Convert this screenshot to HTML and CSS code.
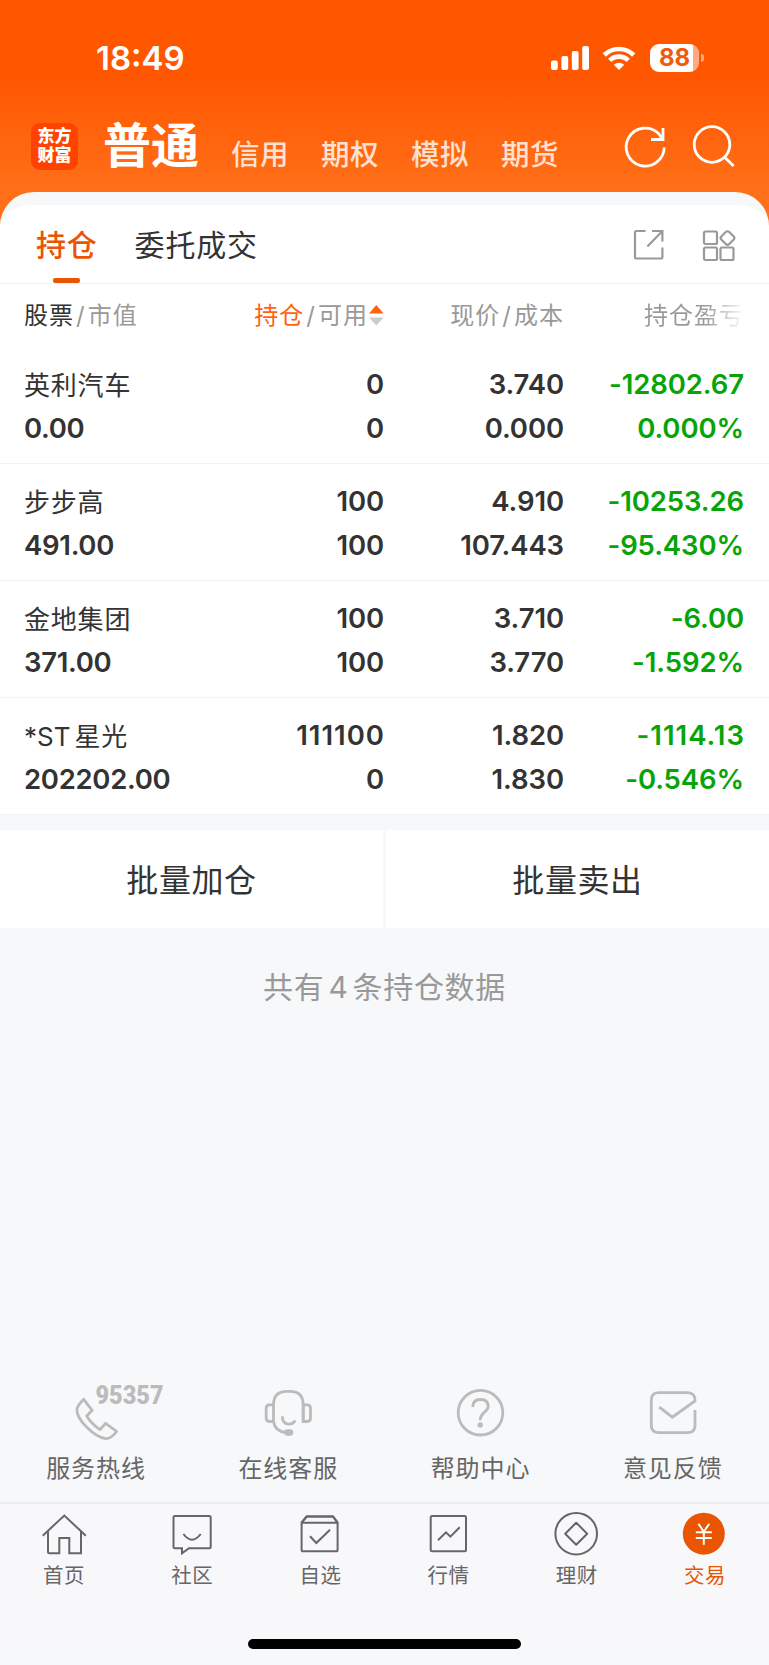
FILE: index.html
```html
<!DOCTYPE html>
<html lang="zh-CN">
<head>
    <meta charset="UTF-8">
    <meta name="viewport" content="width=device-width, initial-scale=1.0">
    <title>持仓</title>
    <link rel="stylesheet" href="styles.css">
</head>
<body>
    <div class="page">
        <header class="top">
            <div class="status">
                <span class="time">18:49</span>
                <div class="status-icons">
                    <svg class="signal" width="38" height="24" viewBox="0 0 38 24" fill="#fff">
                        <rect x="0" y="14.5" width="6.8" height="9.5" rx="2"/>
                        <rect x="10.4" y="10" width="6.8" height="14" rx="2"/>
                        <rect x="20.8" y="5" width="6.8" height="19" rx="2"/>
                        <rect x="31.2" y="0" width="6.8" height="24" rx="2"/>
                    </svg>
                    <svg class="wifi" width="34" height="24" viewBox="0 0 34 24" fill="none" stroke="#fff" stroke-width="4.6">
                        <path d="M2.3 9a21 21 0 0 1 29.4 0"/>
                        <path d="M7.7 14.4a13.3 13.3 0 0 1 18.6 0"/>
                        <path d="M17 24l-5.2-5.2a7.4 7.4 0 0 1 10.4 0z" fill="#fff" stroke="none"/>
                    </svg>
                    <div class="battery"><span>88</span></div>
                    <div class="battery-tip"></div>
                </div>
            </div>
            <nav class="accounts">
                <div class="logo">东方<br>财富</div>
                <a class="account active">普通</a>
                <a class="account">信用</a>
                <a class="account">期权</a>
                <a class="account">模拟</a>
                <a class="account">期货</a>
                <svg class="refresh" width="44" height="44" viewBox="0 0 44 44" fill="none" stroke="#fff" stroke-width="2.8">
                    <path d="M41.2 22.5A19 19 0 1 1 35.5 8.5L40 14.5M40 3v11.5H28"/>
                </svg>
                <svg class="search" width="44" height="44" viewBox="0 0 44 44" fill="none" stroke="#fff" stroke-width="2.8">
                    <circle cx="21" cy="19.5" r="17.8"/><path d="M33.4 31.9l9.2 9"/>
                </svg>
            </nav>
        </header>

        <main class="panel">
            <div class="tabs">
                <a class="tab active">持仓</a>
                <a class="tab">委托成交</a>
                <svg class="share" width="32" height="32" viewBox="0 0 32 32" fill="none" stroke="#999" stroke-width="2.2">
                    <path d="M12.6 2H3.5Q2 2 2 3.5V28Q2 29.5 3.5 29.5h24.4Q29.4 29.5 29.4 28v-9.5M19 2h10.4v10.5M29.4 2l-15 15.5"/>
                </svg>
                <svg class="grid-icon" width="34" height="34" viewBox="0 0 34 34" fill="none" stroke="#999" stroke-width="2.2">
                    <rect x="2" y="2.5" width="13" height="12.5" rx="1.5"/>
                    <rect x="2" y="18.5" width="13" height="12.5" rx="1.5"/>
                    <rect x="18.5" y="18.5" width="13" height="12.5" rx="1.5"/>
                    <rect x="20" y="3.5" width="11" height="11" rx="2.5" transform="rotate(45 25.5 9)"/>
                </svg>
            </div>

            <div class="row head">
                <div><b>股票</b><i>/</i>市值</div>
                <div class="sort"><b class="orange">持仓</b><i>/</i>可用<svg width="15" height="21" viewBox="0 0 15 21"><path d="M0 8.500L7.300 0l7.200 8.500z" fill="#ff6210"/><path d="M0 12.500h14.500L7.300 20.500z" fill="#ccc"/></svg></div>
                <div>现价<i>/</i>成本</div>
                <div class="fade">持仓盈亏</div>
            </div>
            <div class="row">
                <div><span class="name">英利汽车</span>0.00</div>
                <div>0<br>0</div>
                <div>3.740<br>0.000</div>
                <div class="green">-12802.67<br>0.000%</div>
            </div>
            <div class="row">
                <div><span class="name">步步高</span>491.00</div>
                <div>100<br>100</div>
                <div>4.910<br>107.443</div>
                <div class="green">-10253.26<br>-95.430%</div>
            </div>
            <div class="row">
                <div><span class="name">金地集团</span>371.00</div>
                <div>100<br>100</div>
                <div>3.710<br>3.770</div>
                <div class="green">-6.00<br>-1.592%</div>
            </div>
            <div class="row">
                <div><span class="name"><span class="latin">*ST</span>星光</span>202202.00</div>
                <div><span class="loose">111100</span><br>0</div>
                <div>1.820<br>1.830</div>
                <div class="green"><span class="loose">-1114.13</span><br>-0.546%</div>
            </div>
        </main>

        <div class="batch">
            <a>批量加仓</a>
            <a>批量卖出</a>
        </div>
        <p class="count">共有<span>4</span>条持仓数据</p>

        <div class="services">
            <a>
                <svg width="136" height="60" viewBox="0 0 136 60" fill="none" stroke="#bbb" stroke-width="2.8" stroke-linejoin="round">
                    <path d="M55.7 15.3L64.2 26.3 58.7 32Q63.5 40 72 45.6L77.7 39.3 88.7 47.5Q83 54.8 77.5 54.6C67 53 48.3 36.5 48.9 25Q50 21 55.7 15.3z"/>
                    <text class="hotline" x="67.5" y="19.5" textLength="68" lengthAdjust="spacingAndGlyphs">95357</text>
                </svg>
                服务热线
            </a>
            <a>
                <svg width="60" height="60" viewBox="0 0 60 60" fill="none" stroke="#bbb" stroke-width="2.8">
                    <path d="M15.5 37.5V21Q15.5 7.3 29 7.3h3Q45.2 7.3 45.2 21v16.5M15.5 37.5Q17 47.5 28 48.5"/>
                    <path d="M15.5 20.8h-4Q8.2 20.8 8.2 24v10.3q0 3.2 3.3 3.2h4M45.2 20.8h4q3.3 0 3.3 3.2v10.3q0 3.2-3.3 3.2h-4z"/>
                    <path d="M24.3 32.3Q24.3 40.2 31 40.2q4 0 6.2-3.7"/>
                    <rect x="26.3" y="45.3" width="9" height="6.5" rx="3" fill="#bbb" stroke="none"/>
                </svg>
                在线客服
            </a>
            <a>
                <svg width="60" height="60" viewBox="0 0 60 60" fill="none" stroke="#bbb" stroke-width="2.8">
                    <circle cx="29.5" cy="28.7" r="22.3"/>
                    <path d="M21.8 23Q21.8 15.5 29.5 15.5t7.7 7C37.2 28 29.2 28 29.2 36.3"/>
                    <circle cx="29.2" cy="41" r="2.7" fill="#bbb" stroke="none"/>
                </svg>
                帮助中心
            </a>
            <a>
                <svg width="60" height="60" viewBox="0 0 60 60" fill="none" stroke="#bbb" stroke-width="2.8">
                    <path d="M16.3 23.2l13 10L52 17q.3-8.300-7.500-8.300H16Q8.300 8.700 8.300 16v25.500q0 7.200 7.700 7.200h28.500q7.500 0 7.500-7.200V26"/>
                </svg>
                意见反馈
            </a>
        </div>

        <nav class="tabbar">
            <a>
                <svg width="48" height="48" viewBox="0 0 48 48" fill="none" stroke="#666" stroke-width="2">
                    <path d="M2.7 25.7L24.3 5.5l21.5 20.2M8 21.5v20.3q0 1.5 1.5 1.5h9.8V28h10v15.3H41V21.5"/>
                </svg>
                首页
            </a>
            <a>
                <svg width="48" height="48" viewBox="0 0 48 48" fill="none" stroke="#666" stroke-width="2">
                    <path d="M7 6h34.2q1.5 0 1.5 1.5v29.3q0 1.5-1.5 1.5H21l-7 5v-5H7q-1.5 0-1.5-1.5V7.5Q5.5 6 7 6zM15.4 24q8.6 11.5 17.3 0"/>
                </svg>
                社区
            </a>
            <a>
                <svg width="48" height="48" viewBox="0 0 48 48" fill="none" stroke="#666" stroke-width="2">
                    <path d="M5.6 12.7h36v27q0 1.6-1.6 1.6H7.2q-1.6 0-1.6-1.6zl5-6.2h26.4l4.6 6.2M14 26.3l6.3 6.7L34 19.7"/>
                    <path d="M5.6 12.7l5-6.2h26.400l4.600 6.200"/>
                </svg>
                自选
            </a>
            <a>
                <svg width="48" height="48" viewBox="0 0 48 48" fill="none" stroke="#666" stroke-width="2">
                    <rect x="5.7" y="6" width="35.3" height="35.3" rx="1.5"/>
                    <path d="M13 30.3l8-8 4.4 4.4 9.3-9.4"/>
                </svg>
                行情
            </a>
            <a>
                <svg width="48" height="48" viewBox="0 0 48 48" fill="none" stroke="#666" stroke-width="2" stroke-linejoin="round">
                    <circle cx="23.2" cy="23.7" r="20.8"/>
                    <path d="M23.2 12.7l11 11-11 11-11-11z"/>
                </svg>
                理财
            </a>
            <a class="active">
                <svg width="48" height="48" viewBox="0 0 48 48" fill="none" stroke="#fff" stroke-width="2">
                    <circle cx="22.8" cy="23.7" r="21" fill="#ea5504" stroke="none"/>
                    <path d="M17.4 13.7l5.4 8 5.500-8M22.800 21.500v13.200M14.800 22.200h16M14.800 28h16"/>
                </svg>
                交易
            </a>
        </nav>
        <div class="home-bar"></div>
    </div>
</body>
</html>
```

FILE: styles.css
```css
* { box-sizing: border-box; }
body { margin: 0; background-color: #f7f8fa; font-family: Inter, "Noto Sans CJK SC", sans-serif; color: #333; }
.page { width: 769px; height: 1665px; display: flex; flex-direction: column; overflow: hidden; }
svg { display: block; flex: none; overflow: visible; }

.top { height: 232px; flex: none; background: linear-gradient(#ff5600 0, #ff5600 72px, #ff7019 192px); color: #fff; }
.status { height: 115px; padding: 0 65px 0 96px; display: flex; justify-content: space-between; align-items: center; }
.time { font-size: 33px; font-weight: 600; line-height: 40px; }
.status-icons { display: flex; align-items: center; }
.wifi { margin: 0 14px 0 13px; }
.battery { width: 49px; height: 28px; border-radius: 9px; background: linear-gradient(90deg, #fff 43px, #ffab80 43px); color: #f25a0a; font-size: 24px; font-weight: 700; line-height: 28px; text-align: center; }
.battery-tip { width: 3px; height: 8px; margin-left: 2px; border-radius: 0 4px 4px 0; background-color: #ffab80; }

.accounts { height: 77px; padding: 0 34px 0 31px; display: flex; align-items: flex-start; }
.logo { width: 47px; height: 47px; margin: 8px 25px 0 0; padding-top: 4px; border-radius: 9px; background-color: #ff4200; font-size: 17px; font-weight: 900; line-height: 19px; text-align: center; }
.account { margin: 20px 32px 0 0; font-size: 28.5px; font-weight: 500; line-height: 40px; letter-spacing: 0.5px; color: #ffe1d1; }
.account.active { margin: 1px 32px 0 0; font-size: 48px; font-weight: 700; line-height: 60px; letter-spacing: 0; color: #fff; }
.refresh { margin: 10px 24px 0 auto; }
.search { margin: 10px 0 0; }

.panel { height: 623px; margin-top: -40px; flex: none; border-radius: 34px 34px 0 0; border-top: 13px solid #f7f8fa; background-color: #fff; }
.tabs { height: 79px; padding: 0 33px 0 36px; display: flex; border-bottom: 1px solid #f3f3f3; }
.tab { margin-right: 37px; font-size: 30px; line-height: 80px; letter-spacing: 0.8px; }
.tab.active { display: flex; flex-direction: column; align-items: center; font-weight: 500; color: #ea5504; }
.tab.active::after { content: ""; width: 27px; height: 5px; margin-top: -7px; border-radius: 2px; background-color: #ea5504; }
.share { margin: 24px 37px 0 auto; }
.grid-icon { margin-top: 24px; }

.row { height: 117px; padding: 15px 25px 0 24px; display: grid; grid-template-columns: 200px 160px 180px 1fr; border-bottom: 1px solid #f3f3f3; text-align: right; font-size: 27.5px; font-weight: 600; line-height: 44px; letter-spacing: -0.1px; }
.row > div:first-child { text-align: left; letter-spacing: -0.3px; }
.row .name { display: block; height: 44px; font-size: 26px; font-weight: 400; line-height: 47px; letter-spacing: 0.8px; }
.latin { margin-right: 4px; letter-spacing: 0; }
.loose { letter-spacing: 1px; margin-right: -1px; }
.green { color: #07a407; }
.row.head, .row.head > div:first-child { letter-spacing: 1px; }
.row.head { height: 63px; padding-top: 10px; border-bottom: none; font-size: 24px; font-weight: 400; color: #999; }
.head b { font-weight: 400; color: #333; }
.head i { margin: 0 2px; font-style: normal; }
.head .orange { color: #ff6210; }
.sort { display: flex; justify-content: flex-end; }
.sort svg { margin: 11px 0 0 1px; }
.fade { background: linear-gradient(90deg, #999 140px, #fff 181px); -webkit-background-clip: text; background-clip: text; color: transparent; }

.batch { height: 98px; margin-top: 15px; flex: none; display: grid; grid-template-columns: 383px 1fr; gap: 3px; }
.batch a { height: 98px; background-color: #fff; font-size: 32px; line-height: 101px; letter-spacing: 0.6px; text-align: center; }
.count { margin: 36px 0 0; font-size: 30px; line-height: 46px; letter-spacing: 0.7px; text-align: center; color: #999; }
.count span { margin: 0 4px; }

.services { height: 118px; margin-top: auto; flex: none; display: grid; grid-template-columns: repeat(4, 1fr); }
.services a { display: flex; flex-direction: column; align-items: center; font-size: 24px; line-height: 49px; letter-spacing: 1px; color: #666; }
.hotline { font-family: Roboto, sans-serif; font-size: 25px; font-weight: 900; letter-spacing: 0; fill: #bbb; stroke: none; }

.tabbar { height: 137px; flex: none; padding-top: 6px; display: grid; grid-template-columns: repeat(6, 1fr); border-top: 2px solid #ebecee; background-color: #f8f8fb; }
.tabbar a { display: flex; flex-direction: column; align-items: center; font-size: 20.5px; line-height: 35px; letter-spacing: 0.5px; color: #666; }
.tabbar .active { color: #ea5504; }
.home-bar { width: 273px; height: 10px; margin: 0 auto 16px; flex: none; border-radius: 5px; background-color: #000; }
```
